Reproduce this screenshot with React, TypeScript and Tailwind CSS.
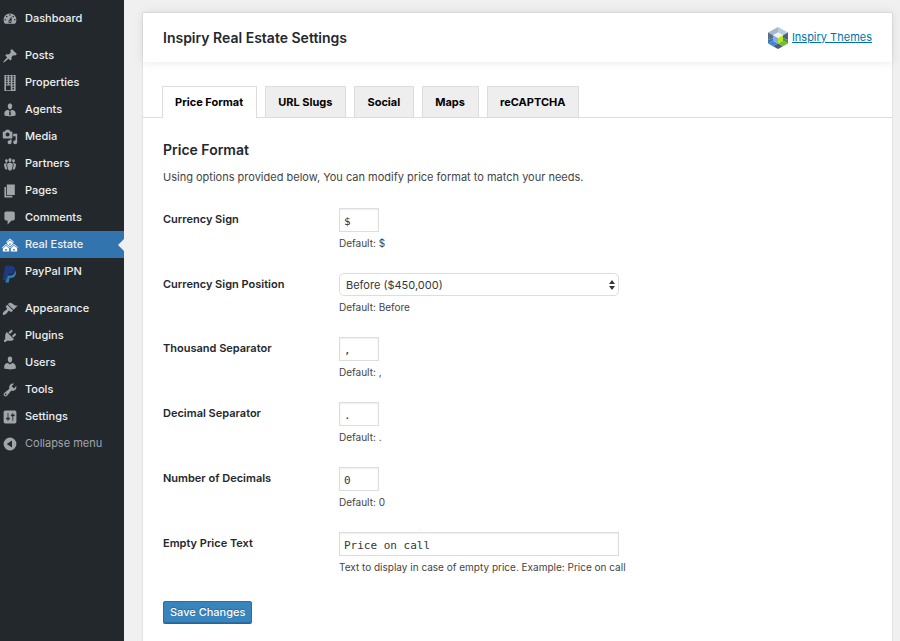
import { useState } from "react";
import type { ReactNode } from "react";

const icons = {
  dashboard:
    "M3.76 16h12.48c1.1-1.37 1.76-3.11 1.76-5 0-4.42-3.58-8-8-8s-8 3.58-8 8c0 1.89.66 3.63 1.76 5zM10 4c.55 0 1 .45 1 1s-.45 1-1 1-1-.45-1-1 .45-1 1-1zM6 6c.55 0 1 .45 1 1s-.45 1-1 1-1-.45-1-1 .45-1 1-1zm8 0c.55 0 1 .45 1 1s-.45 1-1 1-1-.45-1-1 .45-1 1-1zm-5.37 5.55L12 7v6c0 1.1-.9 2-2 2s-2-.9-2-2c0-.57.24-1.08.63-1.45zM4 10c.55 0 1 .45 1 1s-.45 1-1 1-1-.45-1-1 .45-1 1-1zm12 0c.55 0 1 .45 1 1s-.45 1-1 1-1-.45-1-1 .45-1 1-1zm-5 3c0-.55-.45-1-1-1s-1 .45-1 1 .45 1 1 1 1-.45 1-1z",
  pin: "M10.44 3.02l1.82-1.82 6.36 6.35-1.83 1.82c-1.05-.68-2.48-.57-3.41.36l-.75.75c-.92.93-1.04 2.35-.35 3.41l-1.83 1.82-2.41-2.41-2.8 2.79c-.42.42-3.38 2.71-3.8 2.29s1.86-3.39 2.28-3.81l2.79-2.79L4.1 9.36l1.83-1.82c1.05.69 2.48.57 3.4-.36l.75-.75c.93-.92 1.05-2.35.36-3.41z",
  building:
    "M3 20h14V0H3v20zM7 3H5V1h2v2zm4 0H9V1h2v2zm4 0h-2V1h2v2zM7 6H5V4h2v2zm4 0H9V4h2v2zm4 0h-2V4h2v2zM7 9H5V7h2v2zm4 0H9V7h2v2zm4 0h-2V7h2v2zm-8 3H5v-2h2v2zm4 0H9v-2h2v2zm4 0h-2v-2h2v2zm-4 7H5v-6h6v6zm4-4h-2v-2h2v2zm0 3h-2v-2h2v2z",
  agent:
    "M7.3 6l-.03-.19c-.04-.37-.05-.73-.03-1.08.02-.36.1-.71.25-1.04.14-.32.31-.61.52-.86s.49-.46.83-.6c.34-.15.72-.23 1.13-.23.69 0 1.26.2 1.71.59s.76.87.91 1.44.18 1.16.09 1.78l-.03.19c-.01.09-.05.25-.11.48-.05.24-.12.47-.2.69-.08.21-.19.45-.34.72-.14.27-.3.49-.47.69-.18.19-.4.34-.67.48-.27.13-.55.19-.86.19s-.59-.06-.87-.19c-.26-.13-.49-.29-.67-.5-.18-.2-.34-.42-.49-.66-.15-.25-.26-.49-.34-.73-.09-.25-.16-.47-.21-.67-.06-.21-.1-.37-.12-.5zm9.2 6.24c.41.7.5 1.41.5 2.14v2.49c0 .03-.12.08-.29.13-.18.04-.42.13-.97.27-.55.12-1.1.24-1.65.34s-1.19.19-1.95.27c-.75.08-1.46.12-2.13.12-.68 0-1.39-.04-2.14-.12-.75-.07-1.4-.17-1.98-.27-.58-.11-1.08-.23-1.56-.34-.49-.11-.8-.21-1.06-.29L3 16.87v-2.49c0-.75.07-1.46.46-2.15s.81-1.25 1.5-1.68C5.66 10.12 7.19 10 8 10l1.67 1.67L9 13v3l1.02 1.08L11 16v-3l-.68-1.33L11.97 10c.77 0 2.2.07 2.9.52.71.45 1.21 1.02 1.63 1.72z",
  media:
    "M13 11V4c0-.55-.45-1-1-1h-1.67L9 1H5L3.67 3H2c-.55 0-1 .45-1 1v7c0 .55.45 1 1 1h10c.55 0 1-.45 1-1zM7 4.5c1.38 0 2.5 1.12 2.5 2.5S8.38 9.5 7 9.5 4.5 8.38 4.5 7 5.62 4.5 7 4.5zM14 6h5v10.5c0 1.38-1.12 2.5-2.5 2.5S14 17.88 14 16.5s1.12-2.5 2.5-2.5c.17 0 .34.02.5.05V9h-3V6zm-4 8.05V13h2v3.5c0 1.38-1.12 2.5-2.5 2.5S7 17.88 7 16.5 8.12 14 9.5 14c.17 0 .34.02.5.05z",
  groups:
    "M8.03 4.46c-.29 1.28.55 3.46 1.97 3.46 1.41 0 2.25-2.18 1.96-3.46-.22-.98-1.08-1.63-1.96-1.63-.89 0-1.74.65-1.97 1.63zm-4.13.9c-.25 1.08.47 2.93 1.67 2.93s1.92-1.85 1.67-2.93c-.19-.83-.92-1.39-1.67-1.39s-1.48.56-1.67 1.39zm8.86 0c-.25 1.08.47 2.93 1.66 2.93 1.2 0 1.92-1.85 1.67-2.93-.19-.83-.92-1.39-1.67-1.39-.74 0-1.47.56-1.66 1.39zm-.59 11.43l1.25-4.3C14.2 10 12.71 8.47 10 8.47c-2.72 0-4.21 1.53-3.44 4.02l1.26 4.3C8.05 17.51 9 18 10 18c.98 0 1.94-.49 2.17-1.21zm-6.1-7.63c-.49.67-.96 1.83-.42 3.59l1.12 3.79c-.34.2-.77.31-1.2.31-.85 0-1.65-.41-1.85-1.03l-1.07-3.65c-.65-2.11.61-3.4 2.92-3.4.27 0 .54.02.79.06-.1.1-.2.22-.29.33zm8.35-.39c2.31 0 3.58 1.29 2.92 3.4l-1.07 3.65c-.2.62-1 1.03-1.85 1.03-.43 0-.86-.11-1.2-.31l1.11-3.77c.55-1.78.08-2.94-.42-3.61-.08-.11-.18-.23-.28-.33.25-.04.51-.06.79-.06z",
  page: "M6 15V2h10v13H6zm-1 1h8v2H3V5h2v11z",
  comment:
    "M5 2h9c1.1 0 2 .9 2 2v7c0 1.1-.9 2-2 2h-2l-5 5v-5H5c-1.1 0-2-.9-2-2V4c0-1.1.9-2 2-2z",
  houses:
    "M14.27 6.87L10 3.14 5.73 6.87 5 6.14l5-4.38 5 4.38zM14 8.42l-4.05 3.43L6 8.38v-.74l4-3.5 4 3.5v.78zM11 9.7V8H9v1.7h2zm-1.73 4.03L5 10 .73 13.73 0 13l5-4.38L10 13zm10 0L15 10l-4.27 3.73L10 13l5-4.38L20 13zM5 11l4 3.5V18H1v-3.5zm10 0l4 3.5V18h-8v-3.5zm-9 6v-2H4v2h2zm10 0v-2h-2v2h2z",
  brush:
    "M14.48 11.06L7.41 3.99l1.5-1.5c.5-.56 2.3-.47 3.51.32 1.21.8 1.43 1.28 2.91 2.1 1.18.64 2.45 1.26 4.45.85zm-.71.71L6.7 4.7 4.93 6.47c-.39.39-.39 1.02 0 1.41l1.06 1.06c.39.39.39 1.03 0 1.42-.6.6-1.43 1.11-2.21 1.69-.35.26-.7.53-1.01.84C1.43 14.23.4 16.08 1.4 17.07c.99 1 2.84-.03 4.18-1.36.31-.31.58-.66.85-1.02.57-.78 1.08-1.61 1.69-2.21.39-.39 1.02-.39 1.41 0l1.06 1.06c.39.39 1.02.39 1.41 0z",
  plug: "M13.11 4.36L9.87 7.6 8 5.73l3.24-3.24c.35-.34 1.05-.2 1.56.32.52.51.66 1.21.31 1.55zm-8 1.77l.91-1.12 9.01 9.01-1.19.84c-.71.71-2.63 1.16-3.82 1.16H6.14L4.9 17.26c-.59.59-1.54.59-2.12 0-.59-.58-.59-1.53 0-2.12l1.24-1.24v-3.88c0-1.13.4-3.19 1.09-3.89zm7.26 3.97l3.24-3.24c.34-.35 1.04-.21 1.55.31.52.51.66 1.21.31 1.55l-3.24 3.25z",
  user: "M10 9.25c-2.27 0-2.73-3.44-2.73-3.44C7 4.02 7.82 2 9.97 2c2.16 0 2.98 2.02 2.71 3.81 0 0-.41 3.44-2.68 3.44zm0 2.57L12.72 10c2.39 0 4.52 2.33 4.52 4.53v2.49s-3.65 1.13-7.24 1.13c-3.65 0-7.24-1.13-7.24-1.13v-2.49c0-2.25 1.94-4.48 4.47-4.48z",
  wrench:
    "M16.68 9.77c-1.34 1.34-3.3 1.67-4.95.99l-5.41 6.52c-.99.99-2.59.99-3.58 0s-.99-2.59 0-3.57l6.52-5.42c-.68-1.65-.35-3.61.99-4.95 1.28-1.28 3.12-1.62 4.72-1.06l-2.89 2.89 2.82 2.82 2.86-2.87c.53 1.58.18 3.39-1.08 4.65zM3.81 16.21c.4.39 1.04.39 1.43 0 .4-.4.4-1.04 0-1.43-.39-.4-1.03-.4-1.43 0-.39.39-.39 1.03 0 1.43z",
  sliders:
    "M18 16V4c0-1.1-.9-2-2-2H4c-1.1 0-2 .9-2 2v12c0 1.1.9 2 2 2h12c1.1 0 2-.9 2-2zM8 11h1c.55 0 1 .45 1 1s-.45 1-1 1H8v1.5c0 .28-.22.5-.5.5s-.5-.22-.5-.5V13H6c-.55 0-1-.45-1-1s.45-1 1-1h1V5.5c0-.28.22-.5.5-.5s.5.22.5.5V11zm5-2h-1c-.55 0-1-.45-1-1s.45-1 1-1h1V5.5c0-.28.22-.5.5-.5s.5.22.5.5V7h1c.55 0 1 .45 1 1s-.45 1-1 1h-1v5.5c0 .28-.22.5-.5.5s-.5-.22-.5-.5V9z",
  collapse: "M10 2a8 8 0 1 0 0 16 8 8 0 0 0 0-16zM12.5 5.5v9L6 10z",
};

type IconName = keyof typeof icons;

function Icon({ name }: { name: IconName }) {
  return (
    <svg viewBox="0 0 20 20" className="size-4 shrink-0 fill-current" aria-hidden="true">
      <path fillRule="evenodd" d={icons[name]} />
    </svg>
  );
}

function PayPalIcon() {
  return (
    <svg viewBox="0 0 16 18" className="mt-1 h-[18px] w-4 shrink-0" aria-hidden="true">
      <path fill="#2b7fae" d="M5.5 5h7.2c1.3.9 1.6 2.4 1.2 4-.6 2.7-2.5 3.9-5.1 3.9H7.6l-.9 4.6H3.5z" />
      <path fill="#1f264f" d="M5.6 5.5 13 4.8c.3 1-.1 2.6-.9 3.7-1.1 1.5-2.6 2.1-4.5 2.1H6l-.8 4.2z" />
      <path fill="#1f3a7a" d="M3.2.8h5.9c2.7 0 4.2 1.3 3.8 3.8-.5 3-2.5 4.5-5.4 4.5H5.4L4.3 15H.6z" />
    </svg>
  );
}

function InspiryLogo() {
  return (
    <svg viewBox="0 0 20 22" className="h-[22px] w-5" aria-hidden="true">
      <path fill="#a7b8c9" d="M10 0v5.5L5 8.2 0 5.5z" />
      <path fill="#b9ccdc" d="M10 0l10 5.5-5 2.7-5-2.7z" />
      <path fill="#5d6c86" d="M0 5.5l5 2.7V11L0 13z" />
      <path fill="#3a75b8" d="M0 13l5-2v2.8l-5 2.7z" />
      <path fill="#4f5f80" d="M20 5.5l-5 2.7V11l5 2z" />
      <path fill="#4f9a30" d="M20 13l-5-2v2.8l5 2.7z" />
      <path fill="#3f86d8" d="M0 16.5l5-2.7 5 2.7-5 2.8z" />
      <path fill="#4a5c7c" d="M5 19.3l5-2.8 5 2.8-5 2.7z" />
      <path fill="#6fbf2a" d="M20 16.5l-5-2.7-5 2.7 5 2.8z" />
      <path fill="#eef3f8" d="M10 5.5l5 2.7-5 2.8-5-2.8z" />
      <path fill="#7fb0e0" d="M5 8.2l5 2.8v5.5l-5-2.7z" />
      <path fill="#b8e61e" d="M15 8.2L10 11v5.5l5-2.7z" />
    </svg>
  );
}

type Item = { label: string; icon: ReactNode; active?: boolean };

const menu: Item[][] = [
  [{ label: "Dashboard", icon: <Icon name="dashboard" /> }],
  [
    { label: "Posts", icon: <Icon name="pin" /> },
    { label: "Properties", icon: <Icon name="building" /> },
    { label: "Agents", icon: <Icon name="agent" /> },
    { label: "Media", icon: <Icon name="media" /> },
    { label: "Partners", icon: <Icon name="groups" /> },
    { label: "Pages", icon: <Icon name="page" /> },
    { label: "Comments", icon: <Icon name="comment" /> },
    { label: "Real Estate", icon: <Icon name="houses" />, active: true },
    { label: "PayPal IPN", icon: <PayPalIcon /> },
  ],
  [
    { label: "Appearance", icon: <Icon name="brush" /> },
    { label: "Plugins", icon: <Icon name="plug" /> },
    { label: "Users", icon: <Icon name="user" /> },
    { label: "Tools", icon: <Icon name="wrench" /> },
    { label: "Settings", icon: <Icon name="sliders" /> },
  ],
];

function Sidebar() {
  return (
    <nav aria-label="Admin menu" className="w-[124px] shrink-0 bg-[#23282d] pt-[5px] text-[11px] font-medium">
      <div className="flex flex-col gap-2.5">
        {menu.map((group) => (
          <ul key={group[0].label}>
            {group.map((item) => (
              <li key={item.label}>
                <a
                  href="#"
                  aria-current={item.active ? "page" : undefined}
                  className={
                    item.active
                      ? "relative flex h-[27px] items-center gap-[7px] bg-[#3274ae] pl-0.5 text-white"
                      : "flex h-[27px] items-center gap-[7px] pl-0.5 text-[#a0a5aa]"
                  }
                >
                  {item.icon}
                  <span className="text-[#f0f0f0]">{item.label}</span>
                  {item.active && (
                    <span className="absolute top-1/2 right-0 -translate-y-1/2 border-y-[6px] border-r-[6px] border-y-transparent border-r-[#f0f0f0]" />
                  )}
                </a>
              </li>
            ))}
          </ul>
        ))}
      </div>
      <button type="button" className="flex h-[27px] w-full items-center gap-[7px] pl-0.5 font-normal text-[#a0a5aa]">
        <Icon name="collapse" />
        Collapse menu
      </button>
    </nav>
  );
}

const tabs = ["Price Format", "URL Slugs", "Social", "Maps", "reCAPTCHA"];

function Row({ id, label, hint, children }: { id: string; label: string; hint: string; children: ReactNode }) {
  return (
    <div className="flex pb-[22px]">
      <label htmlFor={id} className="w-44 shrink-0 pt-1 text-[11px] leading-[15px] font-semibold text-[#23282d]">
        {label}
      </label>
      <div className="min-w-0 flex-1">
        {children}
        <p id={`${id}-hint`} className="mt-1 text-[10px] leading-[15px] text-[#444]">
          {hint}
        </p>
      </div>
    </div>
  );
}

function TextBox({ id, value, wide }: { id: string; value: string; wide?: boolean }) {
  return (
    <input
      id={id}
      type="text"
      defaultValue={value}
      aria-describedby={`${id}-hint`}
      className={`${wide ? "w-full max-w-[280px]" : "w-10"} block h-6 border border-[#ddd] bg-white px-1 pt-0.5 font-['DejaVu_Sans_Mono',monospace] text-[11px] text-[#32373c] shadow-[inset_0_1px_2px_rgba(0,0,0,0.07)] outline-none`}
    />
  );
}

export default function App() {
  const [active, setActive] = useState("Price Format");
  return (
    <div className="flex min-h-screen bg-[#f0f0f0] font-[Inter,sans-serif] text-[#444]">
      <Sidebar />
      <main className="flex min-w-0 flex-1 flex-col pt-3 pr-[7px] pl-[18px]">
        <div className="flex-1 border border-b-0 border-[#e2e2e2] bg-white">
          <header className="flex h-[49px] items-center justify-between px-5 shadow-[0_0_10px_rgba(0,0,0,0.1)]">
            <h1 className="text-[14px] leading-5 font-semibold text-[#23282d]">Inspiry Real Estate Settings</h1>
            <a href="#" className="flex items-center gap-1 text-[11px] leading-[15px] text-[#0073aa] underline">
              <InspiryLogo />
              Inspiry Themes
            </a>
          </header>

          <div role="tablist" className="mt-6 flex gap-2 border-b border-[#ddd] px-[19px]">
            {tabs.map((tab) => (
              <button
                key={tab}
                type="button"
                role="tab"
                aria-selected={tab === active}
                onClick={() => setActive(tab)}
                className={
                  tab === active
                    ? "-mb-px h-8 border border-b-0 border-[#ddd] bg-white pr-[13px] pl-3 text-[11px] font-bold text-black"
                    : "h-[31px] border border-b-0 border-[#ddd] bg-[#eee] pr-[13px] pl-3 text-[11px] font-bold text-black"
                }
              >
                {tab}
              </button>
            ))}
          </div>

          <form className="px-5 pt-[22px] pb-[17px]" onSubmit={(e) => e.preventDefault()}>
            <h2 className="text-[14px] leading-5 font-semibold text-[#23282d]">Price Format</h2>
            <p className="mt-2.5 mb-[23px] text-[11px] leading-[15px]">
              Using options provided below, You can modify price format to match your needs.
            </p>

            <Row id="currency-sign" label="Currency Sign" hint="Default: $">
              <TextBox id="currency-sign" value="$" />
            </Row>
            <Row id="sign-position" label="Currency Sign Position" hint="Default: Before">
              <div className="grid max-w-[280px] items-center">
                <select
                  id="sign-position"
                  aria-describedby="sign-position-hint"
                  className="col-start-1 row-start-1 h-[23px] w-full appearance-none rounded-[5px] border border-[#ddd] bg-white px-1.5 pt-0.5 text-[11px] text-[#32373c] outline-none"
                >
                  <option>Before ($450,000)</option>
                  <option>After (450,000$)</option>
                </select>
                <svg
                  viewBox="0 0 6 10"
                  className="pointer-events-none col-start-1 row-start-1 mr-1 h-2.5 w-1.5 justify-self-end fill-[#32373c]"
                  aria-hidden="true"
                >
                  <path d="M3 0l3 4H0zM3 10L0 6h6z" />
                </svg>
              </div>
            </Row>
            <Row id="thousand" label="Thousand Separator" hint="Default: ,">
              <TextBox id="thousand" value="," />
            </Row>
            <Row id="decimal" label="Decimal Separator" hint="Default: .">
              <TextBox id="decimal" value="." />
            </Row>
            <Row id="decimals" label="Number of Decimals" hint="Default: 0">
              <TextBox id="decimals" value="0" />
            </Row>
            <Row
              id="empty-price"
              label="Empty Price Text"
              hint="Text to display in case of empty price. Example: Price on call"
            >
              <TextBox id="empty-price" value="Price on call" wide />
            </Row>

            <button
              type="submit"
              className="mt-1 block h-[22px] rounded-[2px] border border-[#2a6ea6] bg-[#3884bd] px-1.5 text-[11px] leading-5 font-medium text-white shadow-[0_1px_0_#2a6594] [text-shadow:0_-1px_1px_#2a6594]"
            >
              Save Changes
            </button>
          </form>
        </div>
      </main>
    </div>
  );
}
